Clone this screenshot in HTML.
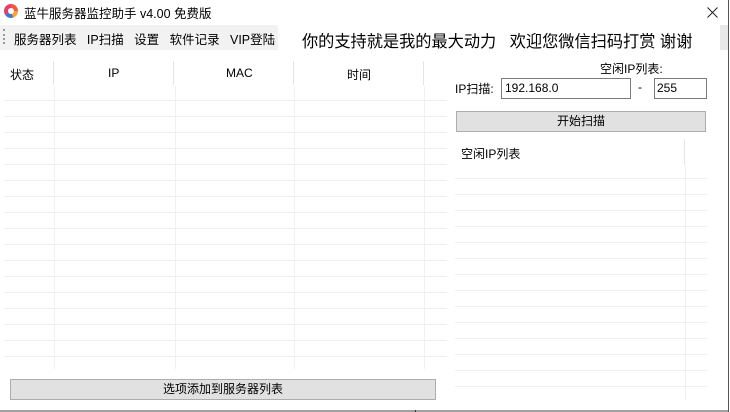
<!DOCTYPE html>
<html><head><meta charset="utf-8"><style>
*{margin:0;padding:0;box-sizing:border-box}
body{width:730px;height:412px;background:#fff;position:relative;overflow:hidden;font-family:"Liberation Sans","Noto Sans CJK SC",sans-serif;font-size:12px;color:#000}
.a{position:absolute;white-space:nowrap}
.hl{position:absolute;height:1px;background:#f0f0f0}
.vl{position:absolute;width:1px;background:#f0f0f0}
</style></head><body>
<div class="a" style="left:4px;top:4px;width:14px;height:14px;border-radius:50%;background:conic-gradient(#f25a3a 0 25%,#f7a23b 25% 45%,#3a7bd5 45% 65%,#e83e6c 65% 100%)"><div style="position:absolute;left:4px;top:4px;width:6px;height:6px;border-radius:50%;background:#fff"></div></div>
<div class="a" style="left:24px;top:3px;font-size:12.5px">蓝牛服务器监控助手 v4.00 免费版</div>
<svg class="a" style="left:707px;top:7px" width="11" height="11"><path d="M0.5 0.5L10.5 10.5M10.5 0.5L0.5 10.5" stroke="#222" stroke-width="1"/></svg>
<div class="a" style="left:728px;top:0;width:1px;height:412px;background:#555"></div>
<div class="a" style="left:0;top:25px;width:278px;height:25px;background:#f2f2f2"></div>
<div class="a" style="left:3px;top:29px;width:2px;height:15px;border-left:2px dotted #999"></div>
<div class="a" style="left:14px;top:29px;font-size:12.5px">服务器列表&nbsp;&nbsp; IP扫描&nbsp;&nbsp; 设置&nbsp;&nbsp; 软件记录&nbsp;&nbsp; VIP登陆</div>
<div class="a" style="left:302px;top:28px;font-size:16.2px">你的支持就是我的最大动力&nbsp;&nbsp; 欢迎您微信扫码打赏 谢谢</div>
<div class="a" style="left:720px;top:25px;width:8px;height:25px;background:#e8e8e8"></div>
<div class="a" style="left:10px;top:66px">状态</div>
<div class="a" style="left:108px;top:66px">IP</div>
<div class="a" style="left:226px;top:66px">MAC</div>
<div class="a" style="left:347px;top:66px">时间</div>
<div class="vl" style="left:53px;top:61px;height:24px;background:#e5e5e5"></div>
<div class="vl" style="left:173px;top:61px;height:24px;background:#e5e5e5"></div>
<div class="vl" style="left:293px;top:61px;height:24px;background:#e5e5e5"></div>
<div class="vl" style="left:423px;top:61px;height:24px;background:#e5e5e5"></div>
<div class="vl" style="left:54px;top:86px;height:283px"></div>
<div class="vl" style="left:175px;top:86px;height:283px"></div>
<div class="vl" style="left:294px;top:86px;height:283px"></div>
<div class="vl" style="left:424px;top:86px;height:283px"></div>
<div id="rl"></div>
<div class="a" style="left:10px;top:379px;width:426px;height:21px;background:#e1e1e1;border:1px solid #adadad;text-align:center;line-height:19px">选项添加到服务器列表</div>
<div class="a" style="left:600px;top:60px">空闲IP列表:</div>
<div class="a" style="left:455px;top:80px">IP扫描:</div>
<div class="a" style="left:501px;top:78px;width:130px;height:21px;border:1px solid #7a7a7a;padding:2px 3px">192.168.0</div>
<div class="a" style="left:638px;top:80px">-</div>
<div class="a" style="left:654px;top:78px;width:53px;height:21px;border:1px solid #7a7a7a;padding:2px 2px">255</div>
<div class="a" style="left:456px;top:111px;width:250px;height:21px;background:#e1e1e1;border:1px solid #adadad;text-align:center;line-height:19px">开始扫描</div>
<div class="a" style="left:461px;top:145px">空闲IP列表</div>
<div class="vl" style="left:684px;top:139px;height:26px;background:#e5e5e5"></div>
<div class="vl" style="left:685px;top:166px;height:234px"></div>
<div class="a" style="left:0;top:410px;width:728px;height:2px;background:#a0a0a0"></div>
<div class="a" style="left:415px;top:410px;width:1px;height:2px;background:#334"></div>
<script>
var h='';
for(var y=100;y<370;y+=16)h+='<div class="hl" style="left:4px;top:'+y+'px;width:443px"></div>';
for(var y=178;y<400;y+=16)h+='<div class="hl" style="left:455px;top:'+y+'px;width:252px"></div>';
document.getElementById('rl').innerHTML=h;
</script>
</body></html>
